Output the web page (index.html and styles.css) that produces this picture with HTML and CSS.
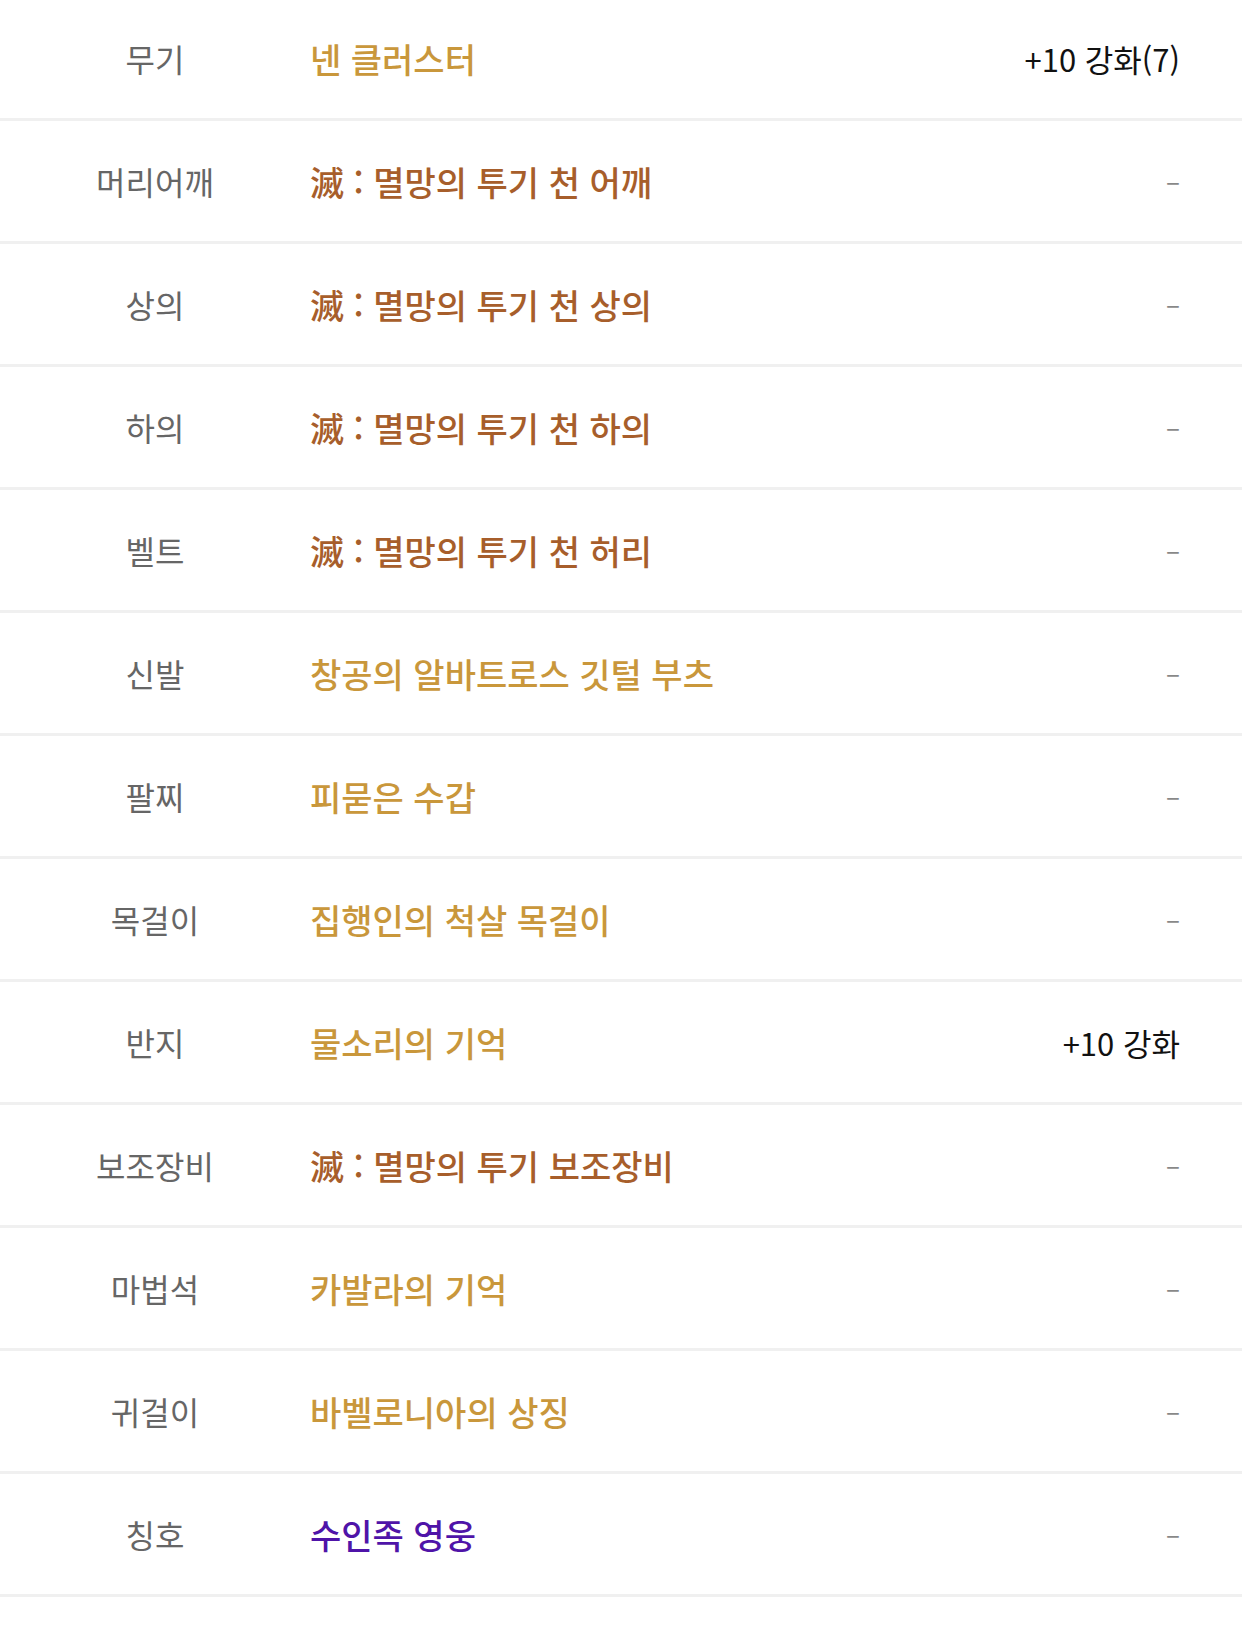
FILE: index.html
```html
<!DOCTYPE html>
<html lang="ko">
<head>
    <meta charset="UTF-8">
    <meta name="viewport" content="width=device-width, initial-scale=1.0">
    <title>장착 장비</title>
    <link rel="stylesheet" href="styles.css">
</head>
<body>
    <!-- Equipment list -->
    <div class="equip-list">
        <div class="equip-row">
            <div class="slot">무기</div>
            <div class="item unique">넨 클러스터</div>
            <div class="reinforce">+10 강화(7)</div>
        </div>
        <div class="equip-row">
            <div class="slot">머리어깨</div>
            <div class="item epic">滅 : 멸망의 투기 천 어깨</div>
            <div class="reinforce empty">–</div>
        </div>
        <div class="equip-row">
            <div class="slot">상의</div>
            <div class="item epic">滅 : 멸망의 투기 천 상의</div>
            <div class="reinforce empty">–</div>
        </div>
        <div class="equip-row">
            <div class="slot">하의</div>
            <div class="item epic">滅 : 멸망의 투기 천 하의</div>
            <div class="reinforce empty">–</div>
        </div>
        <div class="equip-row">
            <div class="slot">벨트</div>
            <div class="item epic">滅 : 멸망의 투기 천 허리</div>
            <div class="reinforce empty">–</div>
        </div>
        <div class="equip-row">
            <div class="slot">신발</div>
            <div class="item unique">창공의 알바트로스 깃털 부츠</div>
            <div class="reinforce empty">–</div>
        </div>
        <div class="equip-row">
            <div class="slot">팔찌</div>
            <div class="item unique">피묻은 수갑</div>
            <div class="reinforce empty">–</div>
        </div>
        <div class="equip-row">
            <div class="slot">목걸이</div>
            <div class="item unique">집행인의 척살 목걸이</div>
            <div class="reinforce empty">–</div>
        </div>
        <div class="equip-row">
            <div class="slot">반지</div>
            <div class="item unique">물소리의 기억</div>
            <div class="reinforce">+10 강화</div>
        </div>
        <div class="equip-row">
            <div class="slot">보조장비</div>
            <div class="item epic">滅 : 멸망의 투기 보조장비</div>
            <div class="reinforce empty">–</div>
        </div>
        <div class="equip-row">
            <div class="slot">마법석</div>
            <div class="item unique">카발라의 기억</div>
            <div class="reinforce empty">–</div>
        </div>
        <div class="equip-row">
            <div class="slot">귀걸이</div>
            <div class="item unique">바벨로니아의 상징</div>
            <div class="reinforce empty">–</div>
        </div>
        <div class="equip-row">
            <div class="slot">칭호</div>
            <div class="item rare">수인족 영웅</div>
            <div class="reinforce empty">–</div>
        </div>
    </div>
</body>
</html>
```

FILE: styles.css
```css
/* Global Reset */
* {
    margin: 0;
    padding: 0;
    box-sizing: border-box;
}

body {
    background: #fff;
    font-family: "Noto Sans CJK KR", "Noto Sans", sans-serif;
    color: #111;
    overflow: hidden;
}

/* List */
.equip-list {
    margin-top: -2px;
}

.equip-row {
    display: flex;
    align-items: center;
    height: 123px;
    border-bottom: 3px solid #f0f0f0;
    padding-right: 62px;
}

/* Slot name */
.slot {
    width: 310px;
    flex-shrink: 0;
    text-align: center;
    font-size: 32px;
    color: #666;
}

/* Item name */
.item {
    flex: 1;
    font-size: 34px;
    font-weight: 500;
}

.item.unique {
    color: #c9973b;
}

.item.epic {
    color: #a75e2b;
}

.item.rare {
    color: #4f14a8;
}

/* Reinforce info */
.reinforce {
    font-size: 31px;
    color: #111;
}

.reinforce.empty {
    color: #888;
    font-size: 26px;
    padding-bottom: 4px;
}
```
